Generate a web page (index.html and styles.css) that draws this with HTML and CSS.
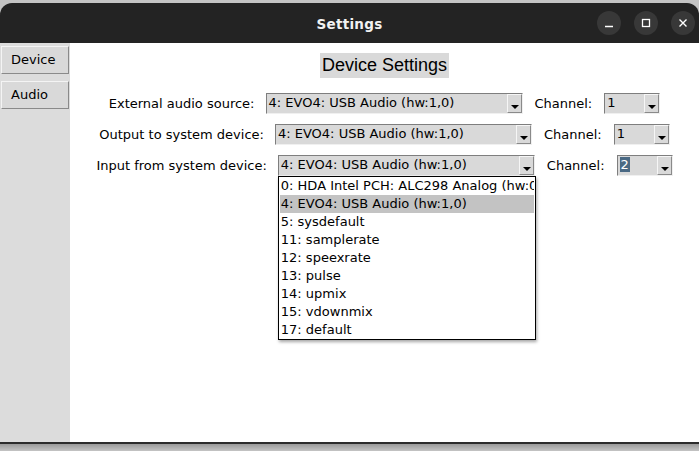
FILE: index.html
```html
<!DOCTYPE html>
<html>
<head>
<meta charset="utf-8">
<link rel="stylesheet" href="styles.css">
</head>
<body>
<div class="screen">
  <div class="titlebar">
    <div class="title">Settings</div>
    <div class="wbtns">
      <span class="wbtn"><svg width="24" height="24" viewBox="0 0 24 24"><line x1="8" y1="15.5" x2="16" y2="15.5" stroke="#fff" stroke-width="1.5"/></svg></span>
      <span class="wbtn"><svg width="24" height="24" viewBox="0 0 24 24"><rect x="8.5" y="8.5" width="7" height="7" fill="none" stroke="#fff" stroke-width="1.3"/></svg></span>
      <span class="wbtn"><svg width="24" height="24" viewBox="0 0 24 24"><path d="M8.5 8.5 L15.5 15.5 M15.5 8.5 L8.5 15.5" stroke="#fff" stroke-width="1.4"/></svg></span>
    </div>
  </div>
  <div class="window">
    <div class="sidebar">
      <div class="tab">Device</div>
      <div class="tab">Audio</div>
    </div>
    <div class="main">
      <div class="heading">Device Settings</div>
      <div class="row">
        <span class="label">External audio source:</span>
        <div class="combo wide"><span class="val">4: EVO4: USB Audio (hw:1,0)</span><span class="arrow"></span></div>
        <span class="label ch">Channel:</span>
        <div class="combo narrow"><span class="val">1</span><span class="arrow"></span></div>
      </div>
      <div class="row">
        <span class="label">Output to system device:</span>
        <div class="combo wide"><span class="val">4: EVO4: USB Audio (hw:1,0)</span><span class="arrow"></span></div>
        <span class="label ch">Channel:</span>
        <div class="combo narrow"><span class="val">1</span><span class="arrow"></span></div>
      </div>
      <div class="row">
        <span class="label">Input from system device:</span>
        <div class="combo wide open"><span class="val">4: EVO4: USB Audio (hw:1,0)</span><span class="arrow"></span>
          <ul class="list">
            <li>0: HDA Intel PCH: ALC298 Analog (hw:0,0)</li>
            <li class="sel">4: EVO4: USB Audio (hw:1,0)</li>
            <li>5: sysdefault</li>
            <li>11: samplerate</li>
            <li>12: speexrate</li>
            <li>13: pulse</li>
            <li>14: upmix</li>
            <li>15: vdownmix</li>
            <li>17: default</li>
          </ul>
        </div>
        <span class="label ch">Channel:</span>
        <div class="combo narrow"><span class="val"><span class="hl">2</span></span><span class="arrow"></span></div>
      </div>
    </div>
  </div>
  <div class="shadow"></div>
</div>
</body>
</html>
```
FILE: styles.css
```css
* { box-sizing: border-box; }
html, body { margin: 0; padding: 0; }
body {
  width: 699px; height: 451px; overflow: hidden;
  background: #c4c4c4;
  font-family: "DejaVu Sans", sans-serif;
  font-size: 13px;
  color: #000;
}
.screen { width: 699px; height: 451px; display: flex; flex-direction: column; }
.titlebar {
  margin-top: 3px;
  height: 40px;
  background: #232323;
  border-radius: 12px 12px 0 0;
  position: relative;
  display: flex; align-items: center; justify-content: center;
}
.title { color: #f2f2f2; font-weight: bold; font-size: 13.5px; letter-spacing: 0.3px; margin-top: 2px; }
.wbtns { position: absolute; right: 4px; top: 8px; display: flex; gap: 13px; }
.wbtn { width: 24px; height: 24px; border-radius: 50%; background: #383838; display: block; }
.wbtn svg { display: block; }
.window { height: 399px; display: flex; background: #fff; }
.sidebar { width: 70px; background: #dcdcdc; padding: 3px 1px 0 1px; display: flex; flex-direction: column; gap: 7px; }
.tab {
  height: 28px; background: #d9d9d9;
  border: 1px solid; border-color: #f4f4f4 #8a8a8a #8a8a8a #f4f4f4;
  padding-left: 9px; line-height: 26px;
}
.main { flex: 1; display: flex; flex-direction: column; align-items: center; padding-top: 10px; }
.heading { background: #d9d9d9; font-family: "Liberation Sans", Arial, sans-serif; font-size: 18px; height: 25px; line-height: 25px; padding: 0 2px; margin-bottom: 15px; }
.row { display: flex; align-items: center; height: 21px; margin-bottom: 10px; }
.label { padding-right: 11px; }
.label.ch { padding-left: 12px; padding-right: 12px; }
.combo {
  height: 21px; background: #d9d9d9; position: relative;
  border: 1px solid; border-color: #7e7e7e #f0f0f0 #f0f0f0 #7e7e7e;
  display: flex;
}
.combo.wide { width: 257px; }
.combo.narrow { width: 56px; }
.val { flex: 1; padding-left: 2px; line-height: 18px; white-space: nowrap; overflow: hidden; }
.hl { background: #4a6984; color: #fff; padding: 0 1px; }
.arrow {
  width: 15px; height: 19px; border: 1px solid; border-color: #f6f6f6 #8a8a8a #8a8a8a #f6f6f6;
  position: relative; background: #d9d9d9;
}
.arrow::after {
  content: ""; position: absolute; left: 3px; bottom: 3px;
  border-left: 4px solid transparent; border-right: 4px solid transparent; border-top: 4px solid #000;
}
.list {
  position: absolute; left: -1px; top: 20px; width: 258px; margin: 0; padding: 0 1px;
  list-style: none; background: #fff; border: 1px solid #000;
  box-shadow: 1px 2px 3px rgba(0,0,0,0.35);
  z-index: 5;
}
.list li { height: 18px; line-height: 18px; padding-left: 1px; white-space: nowrap; overflow: hidden; }
.list li.sel { background: #c3c3c3; }
.shadow { flex: 1; border-top: 2px solid #2c2c2c; background: linear-gradient(#9a9a9a, #c4c4c4); }
```
